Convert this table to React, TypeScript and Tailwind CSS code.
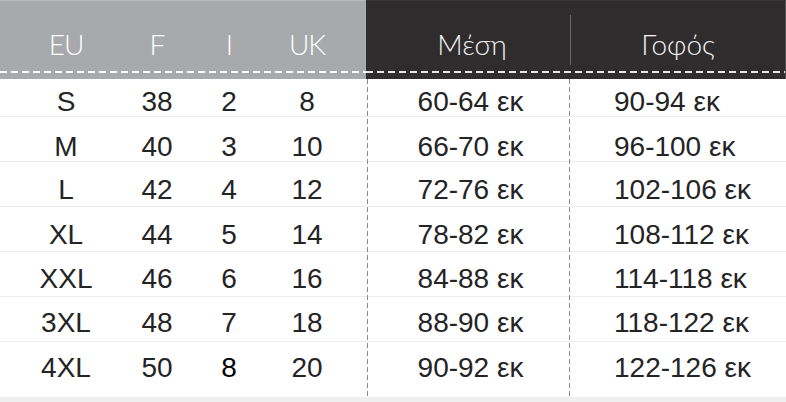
import React from "react";

const rows = [
  ["S", "38", "2", "8", "60-64 εκ", "90-94 εκ"],
  ["M", "40", "3", "10", "66-70 εκ", "96-100 εκ"],
  ["L", "42", "4", "12", "72-76 εκ", "102-106 εκ"],
  ["XL", "44", "5", "14", "78-82 εκ", "108-112 εκ"],
  ["XXL", "46", "6", "16", "84-88 εκ", "114-118 εκ"],
  ["3XL", "48", "7", "18", "88-90 εκ", "118-122 εκ"],
  ["4XL", "50", "8", "20", "90-92 εκ", "122-126 εκ"],
];

const rowCls = [
  "h-[38px] pt-[7px]",
  "h-[45px] pt-[14px]",
  "h-[45px] pt-[12px]",
  "h-[45px] pt-[12px]",
  "h-[45px] pt-[11px]",
  "h-[45px] pt-[10px]",
  "h-[55px] pt-[10px]",
];

const dataFont = { fontFamily: '"Liberation Sans", Arial, sans-serif' };
const headFont = { fontFamily: 'Lato, "Open Sans", sans-serif' };

function HDash({ color }: { color: string }) {
  return (
    <div
      className={
        color === "w"
          ? "h-[2px] w-full bg-[repeating-linear-gradient(90deg,#ffffff_0_7px,transparent_7px_11px)]"
          : "h-[2px] w-full bg-[repeating-linear-gradient(90deg,#e8e8e8_0_7px,transparent_7px_11px)]"
      }
    />
  );
}

function VDash() {
  return (
    <div className="w-px self-stretch bg-[repeating-linear-gradient(180deg,#8a8a8a_0_5px,transparent_5px_8px)]" />
  );
}

export default function App() {
  return (
    <div className="w-[786px] h-[402px] bg-white overflow-hidden flex flex-col">
      {/* Header */}
      <div className="flex h-[79px]">
        <div className="w-[366px] bg-[#a7a9ac] border-t border-[#b9babc] flex flex-col">
          <div
            className="flex-1 flex items-start pt-[28px] text-[28px] font-light text-white leading-[30px] tracking-[-1px]"
            style={headFont}
          >
            <div className="w-[132px] text-center">EU</div>
            <div className="w-[50px] text-center">F</div>
            <div className="w-[94px] text-center">I</div>
            <div className="w-[62px] text-center">UK</div>
          </div>
          <HDash color="w" />
          <div className="h-[6px]" />
        </div>
        <div className="flex-1 bg-[#2f2c2d] border-t border-[#3a3738] border-r border-r-[#555] flex flex-col">
          <div
            className="flex-1 flex items-start text-[28px] font-light text-[#f2f2f2] leading-[30px]"
            style={headFont}
          >
            <div className="w-[204px] text-center pl-[8px] pt-[28px]">Μέση</div>
            <div className="w-px h-[50px] mt-[14px] bg-[#6b6869]" />
            <div className="flex-1 text-center pt-[28px]">Γοφός</div>
          </div>
          <HDash color="g" />
          <div className="h-[6px]" />
        </div>
      </div>

      {/* Body */}
      <div className="flex text-[28px] leading-[32px] text-[#242424]" style={dataFont}>
        <div className="w-[367px] flex flex-col">
          {rows.map((r, i) => (
            <div
              key={i}
              className={`${rowCls[i]} flex items-start ${i < 6 ? "border-b border-[#ececec]" : ""}`}
            >
              <div className="w-[132px] text-center">{r[0]}</div>
              <div className="w-[50px] text-center">{r[1]}</div>
              <div className={`w-[94px] text-center ${i === 6 ? "text-black" : ""}`}>{r[2]}</div>
              <div className="w-[62px] text-center">{r[3]}</div>
            </div>
          ))}
        </div>
        <VDash />
        <div className="w-[201px] flex flex-col">
          {rows.map((r, i) => (
            <div
              key={i}
              className={`${rowCls[i]} text-center pl-[4px] ${i < 6 ? "border-b border-[#ececec]" : ""}`}
            >
              {r[4]}
            </div>
          ))}
        </div>
        <VDash />
        <div className="flex-1 flex flex-col">
          {rows.map((r, i) => (
            <div
              key={i}
              className={`${rowCls[i]} pl-[44px] ${i < 6 ? "border-b border-[#ececec]" : ""}`}
            >
              {r[5]}
            </div>
          ))}
        </div>
      </div>
      <div className="flex-1 bg-[#efefef]" />
    </div>
  );
}
